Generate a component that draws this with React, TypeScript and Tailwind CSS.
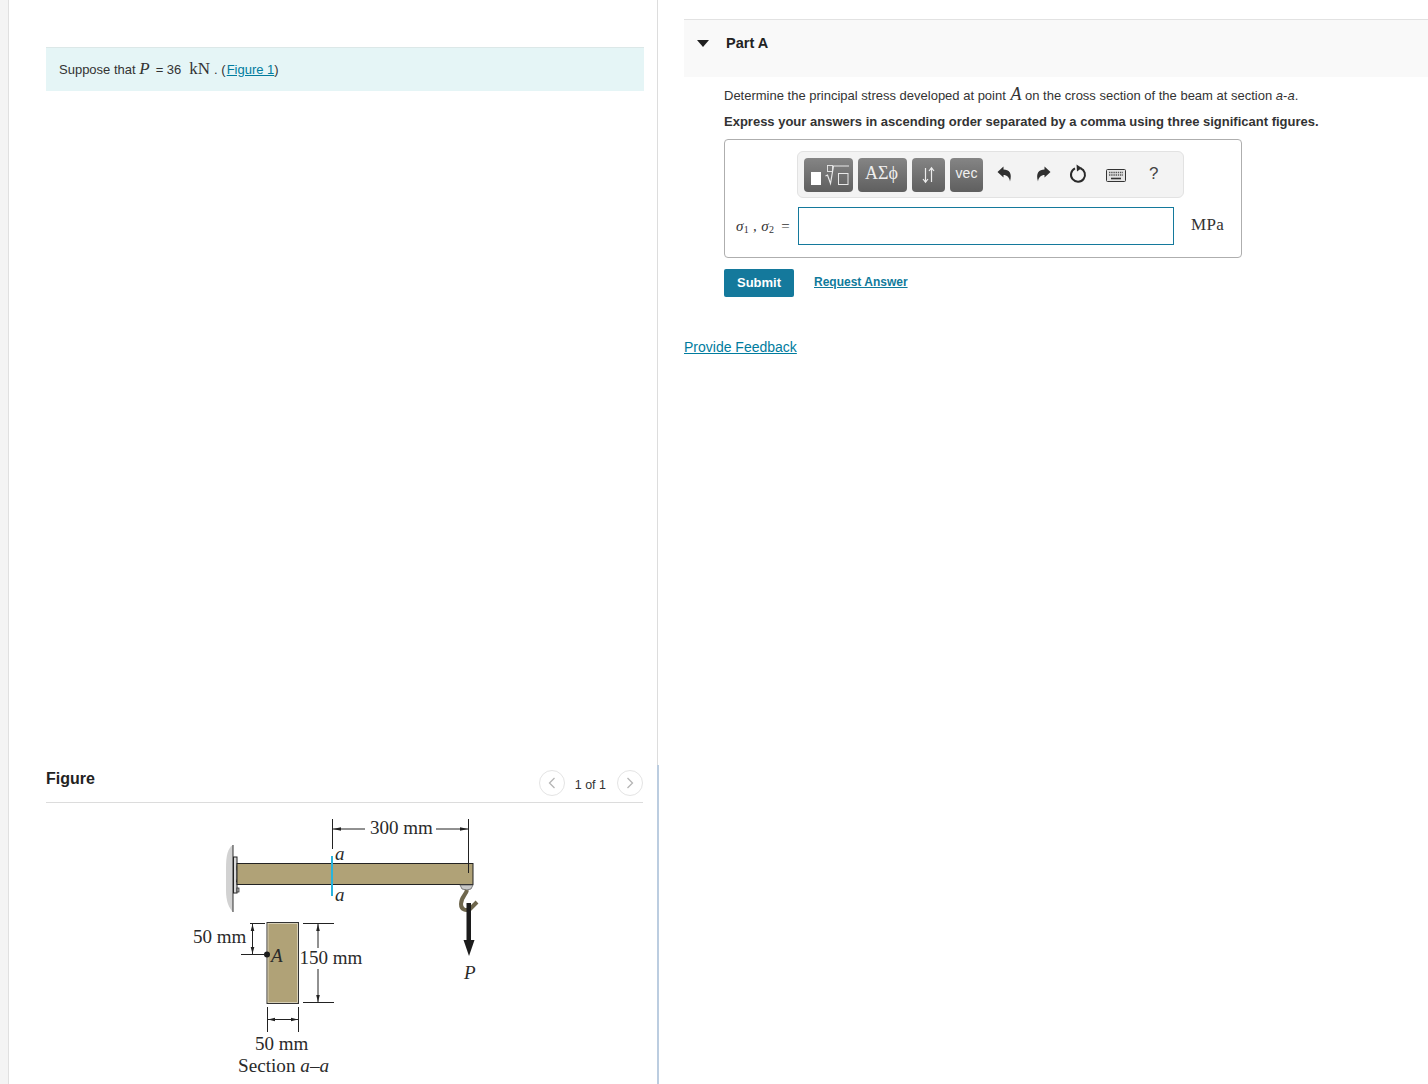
import React from "react";

const serif = "[font-family:'Liberation_Serif',serif]";

function Beam() {
  const line = "#222";
  const txt = { fontFamily: "'Liberation Serif', serif", fontSize: 19, fill: "#2a2a2a" } as const;
  const ital = { ...txt, fontStyle: "italic" } as const;
  const Arrow = ({ d }: { d: string }) => <path d={d} fill={line} stroke="none" />;
  return (
    <svg width={310} height={274} viewBox="180 810 310 274" className="block">
      {/* wall */}
      <path d="M233 845 C228 848 226 855 226 868 V890 C226 902 229 908 233 912 Z" fill="#d2d2d2" />
      <path d="M233 845V912" stroke="#333" strokeWidth={1} />
      <rect x={233.5} y={857} width={3.5} height={36} fill="#d9d9d9" stroke="#222" strokeWidth={1} />
      <rect x={237} y={866} width={2} height={4} fill="#bbb" stroke="#222" strokeWidth={0.7} />
      <path d="M236 882 L238 875 L241 884 Z" fill="#222" />
      <rect x={237} y={888} width={2} height={4} fill="#bbb" stroke="#222" strokeWidth={0.7} />
      {/* beam */}
      <rect x={237} y={863.5} width={236} height={21} fill="#b0a277" stroke="#222" strokeWidth={1} />
      {/* hook */}
      <path d="M460 885 h13 l-2 4 q-4 2 -9 0 Z" fill="#c8c8c8" stroke="#555" strokeWidth={0.7} />
      <path d="M467 890 C466 895 461 897 461 904 C461 910 466 911 470 909 L477 902" fill="none" stroke="#6f674d" strokeWidth={4} />
      <rect x={466.5} y={903} width={4.5} height={38} fill="#1c1c1c" />
      <path d="M463.5 940 L474.5 940 L469 956 Z" fill="#1c1c1c" />
      {/* 300 mm */}
      <path d="M332.5 819V849M332.5 829H365M436 829H468.5M468.5 819V873" stroke={line} strokeWidth={1} fill="none" />
      <Arrow d="M333 829l8-1.8v3.6z" />
      <Arrow d="M468 829l-8-1.8v3.6z" />
      <text x={370} y={834} style={txt}>300 mm</text>
      {/* section line */}
      <rect x={331} y={856} width={2} height={40} fill="#27b4de" />
      <text x={335} y={860} style={ital}>a</text>
      <text x={335} y={901} style={ital}>a</text>
      {/* cross section */}
      <rect x={267} y={922.5} width={31.5} height={81} fill="#b0a277" stroke="#333" strokeWidth={1} />
      <rect x={268} y={923.5} width={29.5} height={79} fill="none" stroke="#e8e3d0" strokeWidth={0.7} />
      <circle cx={267} cy={954.5} r={3} fill="#1c1c1c" />
      <text x={271} y={962} style={ital}>A</text>
      {/* 50 mm left */}
      <text x={193} y={943} style={txt}>50 mm</text>
      <path d="M250 923.5H265M241 954.5H266M252.5 923.5V954.5" stroke={line} strokeWidth={1} fill="none" />
      <Arrow d="M252.5 924l-1.8 7h3.6z" />
      <Arrow d="M252.5 954l-1.8-7h3.6z" />
      {/* 150 mm */}
      <text x={299.5} y={964} style={txt}>150 mm</text>
      <path d="M303 923.5H334M303 1002.5H334M318 923.5V948M318 969V1002.5" stroke={line} strokeWidth={1} fill="none" />
      <Arrow d="M318 924l-1.8 7h3.6z" />
      <Arrow d="M318 1002l-1.8-7h3.6z" />
      {/* 50 mm bottom */}
      <path d="M267.5 1007V1032M298.5 1007V1032M267.5 1019.5H298.5" stroke={line} strokeWidth={1} fill="none" />
      <Arrow d="M268 1019.5l7-1.8v3.6z" />
      <Arrow d="M298 1019.5l-7-1.8v3.6z" />
      <text x={255} y={1050} style={txt}>50 mm</text>
      <text x={238} y={1072} style={{ ...txt, fontSize: 19.2 }}>Section <tspan fontStyle="italic">a</tspan>–<tspan fontStyle="italic">a</tspan></text>
      <text x={464} y={979} style={ital}>P</text>
    </svg>
  );
}

function GreyBtn({ w, children }: { w: string; children: React.ReactNode }) {
  return (
    <div className={`${w} h-[34px] rounded-[4px] bg-linear-to-b from-[#858585] to-[#5f5f5f] flex items-center justify-center text-white shrink-0`}>
      {children}
    </div>
  );
}

function Toolbar() {
  return (
    <div className="ml-[72px] w-[387px] h-[47px] bg-[#f3f3f3] border border-[#e2e2e2] rounded-[6px] flex items-center pl-[6px]">
      <div className="flex gap-[5px]">
        <GreyBtn w="w-[49px]">
          <svg width={49} height={34} viewBox="0 0 49 34">
            <rect x={7} y={14} width={10} height={13} fill="#fff" />
            <rect x={23.5} y={7.5} width={5} height={6} fill="none" stroke="#e8e8e8" strokeWidth={0.9} />
            <path d="M21.5 18l2-1 3 8.5 3-17.5H45" fill="none" stroke="#e8e8e8" strokeWidth={1.2} />
            <rect x={34.5} y={15.5} width={9.5} height={11} fill="none" stroke="#e8e8e8" strokeWidth={1} />
          </svg>
        </GreyBtn>
        <GreyBtn w="w-[49px]">
          <span className={`${serif} text-[18px] text-[#eeeeee] leading-none relative -top-[2px] -left-[1px]`}>AΣϕ</span>
        </GreyBtn>
        <GreyBtn w="w-[33px]">
          <svg width={16} height={18} viewBox="0 0 16 18" fill="none" stroke="#ededed" strokeWidth={1.2}>
            <path d="M4.5 2V16M2 13l2.5 3.2L7 13" />
            <path d="M10.5 16V2M8 5l2.5-3.2L13 5" />
          </svg>
        </GreyBtn>
        <GreyBtn w="w-[33px]">
          <span className="[font-family:'Liberation_Sans',sans-serif] text-[14px] text-[#f0f0f0] leading-none relative -top-[2px]">vec</span>
        </GreyBtn>
      </div>
      <div className="flex items-center ml-[14px] text-[#333]">
        <svg width={16} height={16} viewBox="0 0 16 16" fill="#2f2f2f" className="relative -top-[1px]">
          <path d="M0.5 6 L6.5 0.5 V3.5 C12 3.5 15.5 7 13 15.5 C12.5 11.5 10 9 6.5 9 V11.5 Z" />
        </svg>
        <svg width={16} height={16} viewBox="0 0 16 16" fill="#2f2f2f" className="ml-[22px] relative -top-[1px]">
          <path d="M15.5 6 L9.5 0.5 V3.5 C4 3.5 0.5 7 3 15.5 C3.5 11.5 6 9 9.5 9 V11.5 Z" />
        </svg>
        <svg width={18} height={20} viewBox="0 0 18 20" fill="none" className="ml-[18px] relative -top-[1px]">
          <path d="M11.5 4.2 A7 7 0 1 1 6 4.4" stroke="#2a2a2a" strokeWidth={2} />
          <path d="M7.5 0.5 L12.8 4 L8 7.5 Z" fill="#2a2a2a" />
        </svg>
        <svg width={20} height={13} viewBox="0 0 20 13" fill="none" className="ml-[19px] relative top-[1px]">
          <rect x={0.5} y={0.5} width={19} height={12} rx={1} fill="#e4e4e4" stroke="#333" />
          <path d="M3 3.5H17M3 6H17" stroke="#555" strokeWidth={1.4} strokeDasharray="1.4 0.8" />
          <path d="M5 9.5H15" stroke="#333" strokeWidth={1.6} />
        </svg>
        <span className="[font-family:'Liberation_Sans',sans-serif] text-[17px] text-[#444] leading-none ml-[23px] relative -top-[1px]">?</span>
      </div>
    </div>
  );
}

export default function App() {
  return (
    <div className="w-[1428px] h-[1084px] overflow-hidden flex bg-white text-[#333] [font-family:'Liberation_Sans',Arial,sans-serif]">
      <div className="w-[9px] shrink-0 bg-[#f4f4f4] border-r border-[#e0e0e0]" />
      <div className="w-[648px] shrink-0 flex flex-col">
        <div className="ml-[37px] mt-[47px] w-[598px] h-[44px] bg-[#e5f5f6] border-t border-[#dce8e8] pl-[13px] flex items-center text-[13px] leading-none pb-[1px]">
          <span>Suppose that&nbsp;</span>
          <span className={`${serif} italic text-[17px] relative -top-[1px]`}>P</span>
          <span className="ml-[6px]">= 36</span>
          <span className={`${serif} text-[17px] ml-[8px] relative -top-[1px]`}>kN</span>
          <span className="ml-[4px]">. (</span>
          <span className="ml-[1px] text-[#007c9e] underline">Figure 1</span>
          <span>)</span>
        </div>
        <div className="ml-[37px] mt-[677px] w-[597px] h-[35px] border-b border-[#dcdcdc] flex items-start justify-between">
          <span className="text-[16px] font-bold text-[#222] leading-[20px] mt-[1px]">Figure</span>
          <div className="flex items-center mt-[2px] text-[12.5px] text-[#333]">
            <div className="w-[26px] h-[26px] rounded-full border border-[#e4e4e4] flex items-center justify-center">
              <svg width={8} height={12} viewBox="0 0 8 12" fill="none" stroke="#b5b5b5" strokeWidth={1.3}><path d="M6.5 1L1.5 6l5 5" /></svg>
            </div>
            <span className="ml-[10px] mr-[11px] relative top-[2px]">1 of 1</span>
            <div className="w-[26px] h-[26px] rounded-full border border-[#e4e4e4] flex items-center justify-center">
              <svg width={8} height={12} viewBox="0 0 8 12" fill="none" stroke="#b5b5b5" strokeWidth={1.3}><path d="M1.5 1l5 5-5 5" /></svg>
            </div>
          </div>
        </div>
        <div className="ml-[171px] mt-[7px]">
          <Beam />
        </div>
      </div>
      <div className="w-[2px] shrink-0 flex flex-col items-start">
        <div className="w-px h-[765px] bg-[#dddddd]" />
        <div className="w-[2px] flex-1 bg-[#bccde0]" />
      </div>
      <div className="flex-1 pl-[25px] pt-[19px] min-w-0">
        <div className="h-[58px] bg-[#f9f9f9] border-t border-[#e2e2e2] flex items-start pt-[15px]">
          <svg width={12} height={7} viewBox="0 0 12 7" className="ml-[13px] mt-[5px]"><path d="M0 0H12L6 7Z" fill="#1f1f1f" /></svg>
          <span className="ml-[17px] text-[14.5px] font-bold text-[#222] leading-[16px]">Part A</span>
        </div>
        <div className="pl-[40px]">
          <p className="mt-[8px] text-[13px] leading-[18px]">
            Determine the principal stress developed at point <span className={`${serif} italic text-[18px] leading-none ml-[1px]`}>A</span> on the cross section of the beam at section <i>a</i>-<i>a</i>.
          </p>
          <p className="mt-[8px] text-[13px] leading-[18px] font-bold">
            Express your answers in ascending order separated by a comma using three significant figures.
          </p>
          <div className="mt-[8px] w-[518px] h-[119px] border border-[#aeaeae] rounded-[4px] pt-[11px]">
            <Toolbar />
            <div className="flex items-center mt-[9px] h-[38px]">
              <span className={`${serif} w-[73px] pl-[11px] text-[15px] italic whitespace-nowrap leading-none tracking-[0.3px]`}>
                σ<span className="not-italic text-[10px] relative top-[2px]">1</span> , σ<span className="not-italic text-[10px] relative top-[2px]">2</span> <span className="not-italic ml-[3px]">=</span>
              </span>
              <div className="w-[376px] h-[38px] border border-[#14799c] bg-white" />
              <span className={`${serif} ml-[17px] text-[17px] tracking-[0.4px] relative -top-[1px]`}>MPa</span>
            </div>
          </div>
          <div className="mt-[11px] flex items-start">
            <div className="w-[70px] h-[28px] bg-[#14799c] rounded-[2px] text-white text-[13px] font-bold flex items-center justify-center">Submit</div>
            <span className="ml-[20px] mt-[5px] text-[12px] leading-[16px] font-bold text-[#0f7a9b] underline">Request Answer</span>
          </div>
        </div>
        <div className="mt-[41px] text-[14px] leading-[18px] text-[#007c9e] underline">Provide Feedback</div>
      </div>
    </div>
  );
}
